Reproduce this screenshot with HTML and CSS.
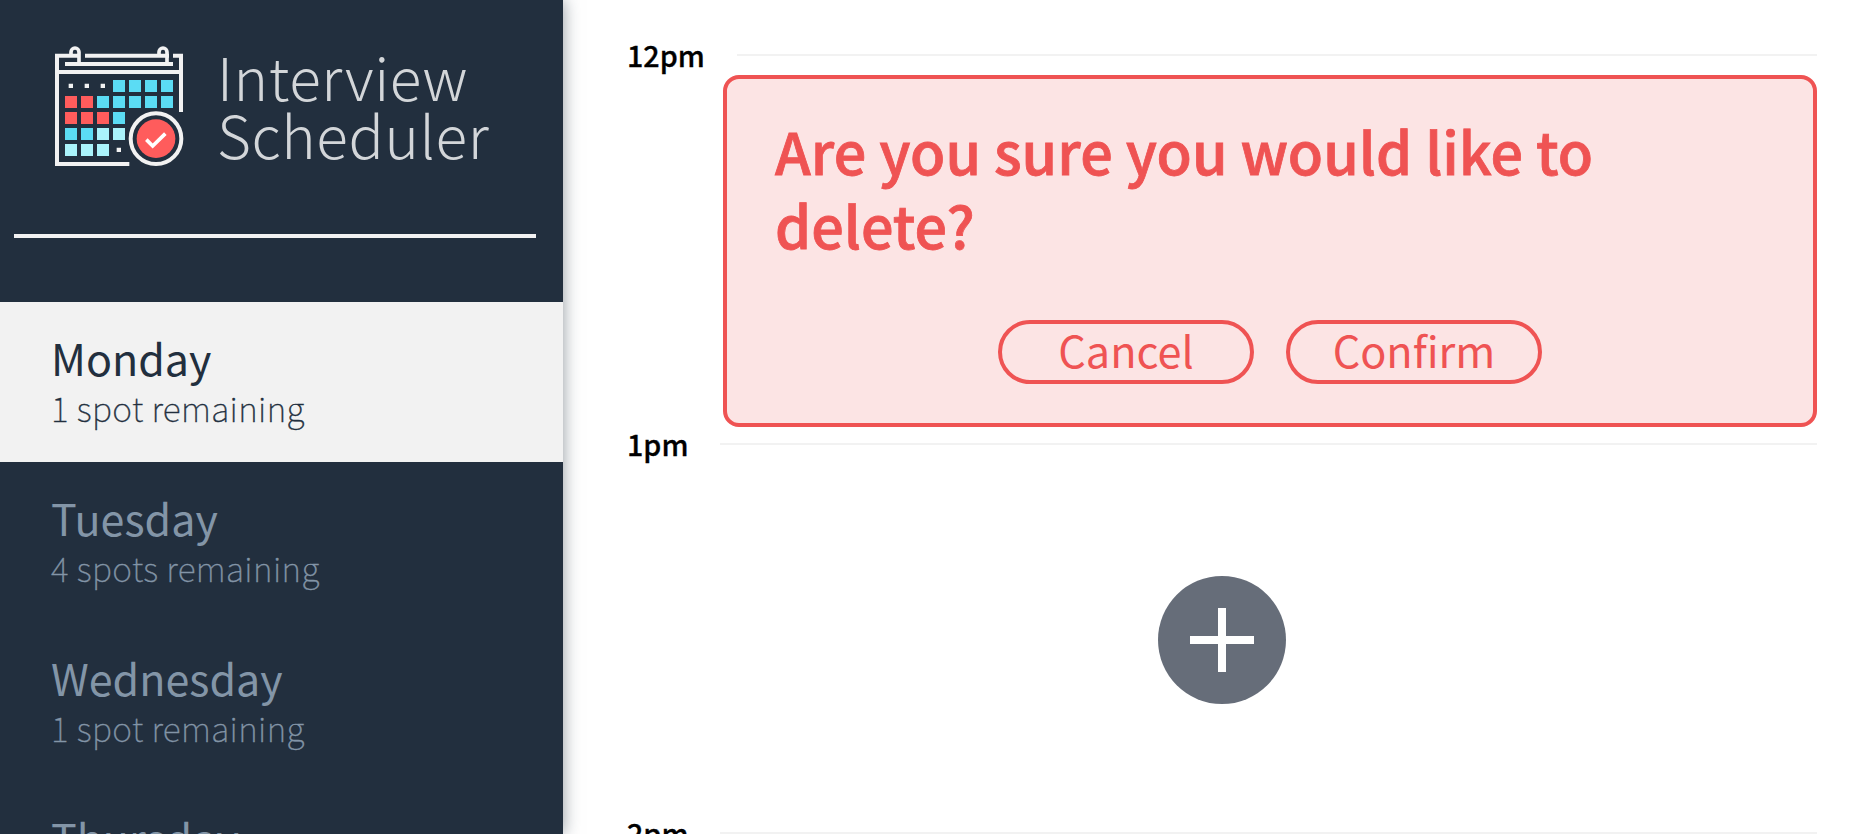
FILE: index.html
```html
<!DOCTYPE html>
<html lang="en">
<head>
<meta charset="utf-8">
<title>Interview Scheduler</title>
<link rel="stylesheet" href="styles.css">
</head>
<body>
<main class="layout">
  <section class="sidebar">
    <div class="logo">
      <svg class="logo-icon" viewBox="0 0 480 450" width="160" height="150">
        <g fill="none" stroke="#f2f2f2" stroke-width="12">
          <path d="M117 77H51V402H268M135 77H387M399 77H423V246M75 102H399M51 126H423"/>
          <path d="M93 77V66a12 12 0 0 1 24 0V102M357 77V66a12 12 0 0 1 24 0V102" stroke-width="11"/>
          <circle cx="348" cy="326" r="76"/>
        </g>
        <circle cx="348" cy="326" r="58" fill="#ff5c5c"/>
        <path d="M319 329L338 348L376 311" fill="none" stroke="#fff" stroke-width="11"/>
        <path fill="#f2f2f2" d="M86 161h13v13h-13zM134 161h13v13h-13zM182 161h13v13h-13zM230 353h13v13h-13z"/>
        <path fill="#5bdcf4" d="M219 150h36v36h-36zM267 150h36v36h-36zM315 150h36v36h-36zM363 150h36v36h-36zM171 198h36v36h-36zM219 198h36v36h-36zM267 198h36v36h-36zM315 198h36v36h-36zM363 198h36v36h-36zM219 246h36v36h-36zM75 294h36v36h-36zM123 294h36v36h-36z"/>
        <path fill="#ff5c5c" d="M75 198h36v36h-36zM123 198h36v36h-36zM75 246h36v36h-36zM123 246h36v36h-36zM171 246h36v36h-36z"/>
        <path fill="#aaf3fb" d="M171 294h36v36h-36zM219 294h36v36h-36zM75 342h36v36h-36zM123 342h36v36h-36zM171 342h36v36h-36z"/>
      </svg>
      <div class="logo-text"><div class="logo-first">Interview</div><div class="logo-second">Scheduler</div></div>
    </div>
    <hr class="separator">
    <ul class="days">
      <li class="day day-selected"><h2 class="day-name">Monday</h2><h3 class="day-spots">1 spot remaining</h3></li>
      <li class="day"><h2 class="day-name">Tuesday</h2><h3 class="day-spots">4 spots remaining</h3></li>
      <li class="day"><h2 class="day-name">Wednesday</h2><h3 class="day-spots">1 spot remaining</h3></li>
      <li class="day"><h2 class="day-name">Thursday</h2></li>
    </ul>
  </section>
  <section class="schedule">
    <header class="time"><h4 class="time-label">12pm</h4><hr class="time-line"></header>
    <article class="confirm">
      <h1 class="confirm-text">Are you sure you would like to delete?</h1>
      <div class="actions"><button class="button">Cancel</button><button class="button">Confirm</button></div>
    </article>
    <header class="time"><h4 class="time-label">1pm</h4><hr class="time-line"></header>
    <article class="empty">
      <svg viewBox="0 0 128 128" width="128" height="128"><circle cx="64" cy="64" r="64" fill="#666d79"/><path d="M32 64H96M64 32V96" stroke="#fff" stroke-width="8"/></svg>
    </article>
    <header class="time"><h4 class="time-label">2pm</h4><hr class="time-line"></header>
  </section>
</main>
</body>
</html>
```
FILE: styles.css
```css
* { box-sizing: border-box; margin: 0; padding: 0; }
body { height: 834px; overflow: hidden; background: #fff; font-family: "Noto Sans CJK SC", sans-serif; }
.layout { display: flex; height: 834px; overflow: hidden; }
.sidebar { width: 563px; flex: none; background: #222f3e; box-shadow: 0 0 16px rgba(34, 47, 62, .5); }
.logo { display: flex; height: 234px; padding: 30px 0 0 40px; }
.logo-icon { flex: none; }
.logo-text { padding: 17px 0 0 17px; font-size: 58.5px; line-height: 58px; font-weight: 300; letter-spacing: .6px; color: #d3d6d9; white-space: nowrap; }
.separator { height: 4px; width: 522px; margin: 0 0 64px 14px; border: 0; background: #f2f2f2; }
.days { list-style: none; }
.day { height: 160px; padding: 31px 0 0 51px; color: #8395a7; white-space: nowrap; }
.day-selected { background: #f2f2f2; color: #222f3e; }
.day-name { font-size: 43px; line-height: 48px; font-weight: 400; }
.day-spots { font-size: 33.6px; line-height: 53px; font-weight: 100; letter-spacing: .4px; -webkit-text-stroke: .4px currentColor; }
.schedule { flex: 1; padding: 38px 43px 0 64px; }
.time { display: flex; align-items: center; gap: 32px; height: 34px; }
.time-label { font-size: 28.7px; line-height: 34px; font-weight: 500; color: #000; -webkit-text-stroke: .3px currentColor; }
.time-line { flex: 1; height: 2px; border: 0; background: #f2f2f2; }
.confirm { width: 1094px; height: 352px; margin: 3px 0 0 auto; padding: 34px 48px 0; border: 4px solid #ef5353; border-radius: 16px; background: #fce4e4; color: #ef5353; }
.confirm-text { width: 880px; font-size: 57.5px; line-height: 74px; font-weight: 500; -webkit-text-stroke: .8px currentColor; }
.actions { display: flex; justify-content: center; gap: 32px; margin-top: 59px; }
.button { width: 256px; height: 64px; padding-bottom: 5px; border: 4px solid #ef5353; border-radius: 32px; background: transparent; color: #ef5353; font: 400 43.2px/51px "Noto Sans CJK SC", sans-serif; }
.empty { display: flex; justify-content: center; height: 355px; padding-top: 115px; }
```
